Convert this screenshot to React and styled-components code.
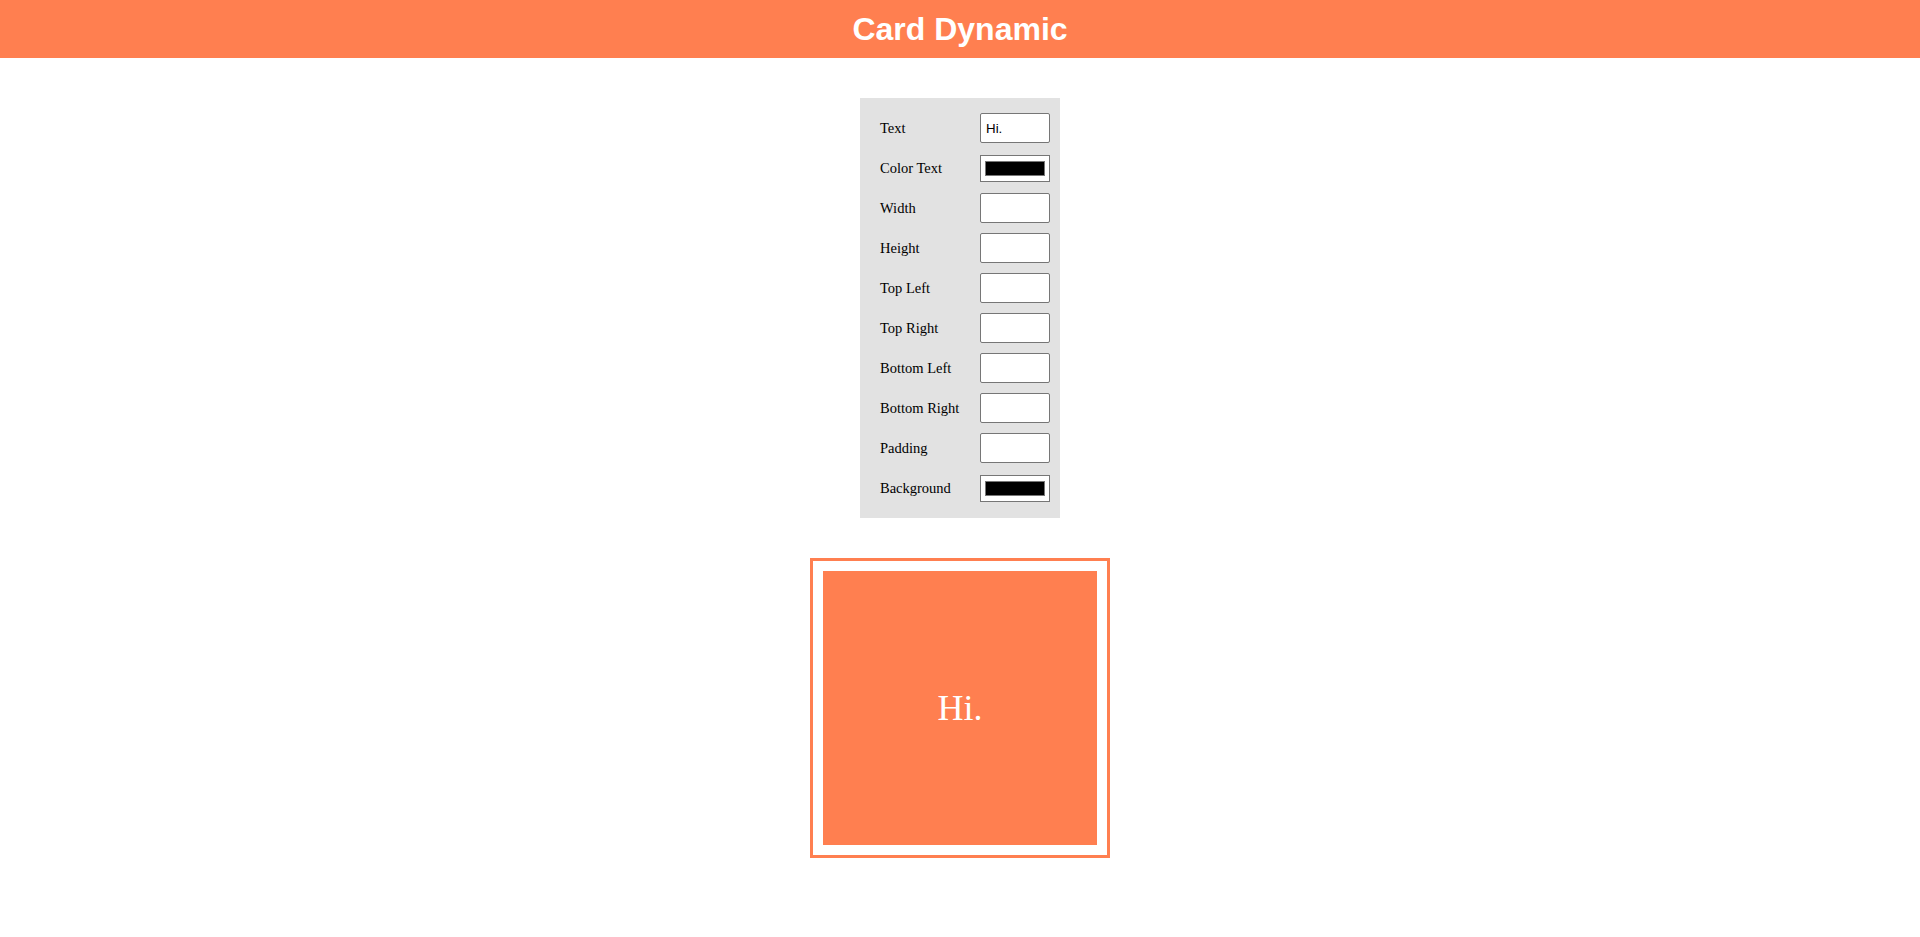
import React, { useState } from 'react';
import styled, { createGlobalStyle } from 'styled-components';

const GlobalStyle = createGlobalStyle`
  body {
    margin: 0;
    background: #ffffff;
    font-family: "Liberation Serif", "Times New Roman", serif;
  }
`;

const Header = styled.header`
  background: #ff7f50;
  height: 58px;
  display: flex;
  align-items: center;
  justify-content: center;
`;

const Title = styled.h1`
  margin: 0;
  color: #ffffff;
  font-family: "Liberation Sans", Arial, sans-serif;
  font-size: 32px;
  font-weight: bold;
`;

const Main = styled.main`
  display: flex;
  flex-direction: column;
  align-items: center;
  gap: 40px;
  padding-top: 40px;
`;

const Panel = styled.form`
  width: 200px;
  box-sizing: border-box;
  background: #e2e2e2;
  padding: 15px 10px 15px 20px;
  display: flex;
  flex-direction: column;
  gap: 10px;
`;

const Field = styled.label`
  display: flex;
  align-items: center;
  justify-content: space-between;
  height: 30px;
  font-size: 14.5px;
  color: #000000;
`;

const TextInput = styled.input`
  width: 70px;
  height: 30px;
  box-sizing: border-box;
  border: 1px solid #767676;
  border-radius: 2px;
  padding: 0 5px;
  font-family: "Liberation Sans", Arial, sans-serif;
  font-size: 13.33px;
  background: #ffffff;
  outline: none;
`;

const ColorInput = styled.input`
  width: 70px;
  height: 27px;
  box-sizing: border-box;
  border: 1px solid #767676;
  border-radius: 0;
  padding: 1px 2px;
  background: #ffffff;
`;

const Frame = styled.div`
  width: 300px;
  height: 300px;
  box-sizing: border-box;
  border: 3px solid #ff7f50;
  padding: 10px;
`;

const Card = styled.div`
  width: 100%;
  height: 100%;
  background: ${(p) => p.bg};
  display: flex;
  align-items: center;
  justify-content: center;
  color: #ffffff;
  font-size: 36px;
`;

const fields = [
  { key: 'text', label: 'Text', type: 'text' },
  { key: 'color', label: 'Color Text', type: 'color' },
  { key: 'width', label: 'Width', type: 'text' },
  { key: 'height', label: 'Height', type: 'text' },
  { key: 'tl', label: 'Top Left', type: 'text' },
  { key: 'tr', label: 'Top Right', type: 'text' },
  { key: 'bl', label: 'Bottom Left', type: 'text' },
  { key: 'br', label: 'Bottom Right', type: 'text' },
  { key: 'padding', label: 'Padding', type: 'text' },
  { key: 'background', label: 'Background', type: 'color' },
];

const App = () => {
  const [values, setValues] = useState({
    text: 'Hi.',
    color: '#000000',
    background: '#000000',
  });

  const update = (key) => (e) => setValues({ ...values, [key]: e.target.value });

  return (
    <>
      <GlobalStyle />
      <Header>
        <Title>Card Dynamic</Title>
      </Header>
      <Main>
        <Panel onSubmit={(e) => e.preventDefault()}>
          {fields.map((f) => (
            <Field key={f.key}>
              {f.label}
              {f.type === 'color' ? (
                <ColorInput type="color" value={values[f.key]} onChange={update(f.key)} />
              ) : (
                <TextInput type="text" value={values[f.key] || ''} onChange={update(f.key)} />
              )}
            </Field>
          ))}
        </Panel>
        <Frame>
          <Card bg="#ff7f50">{values.text}</Card>
        </Frame>
      </Main>
    </>
  );
};

export default App;
